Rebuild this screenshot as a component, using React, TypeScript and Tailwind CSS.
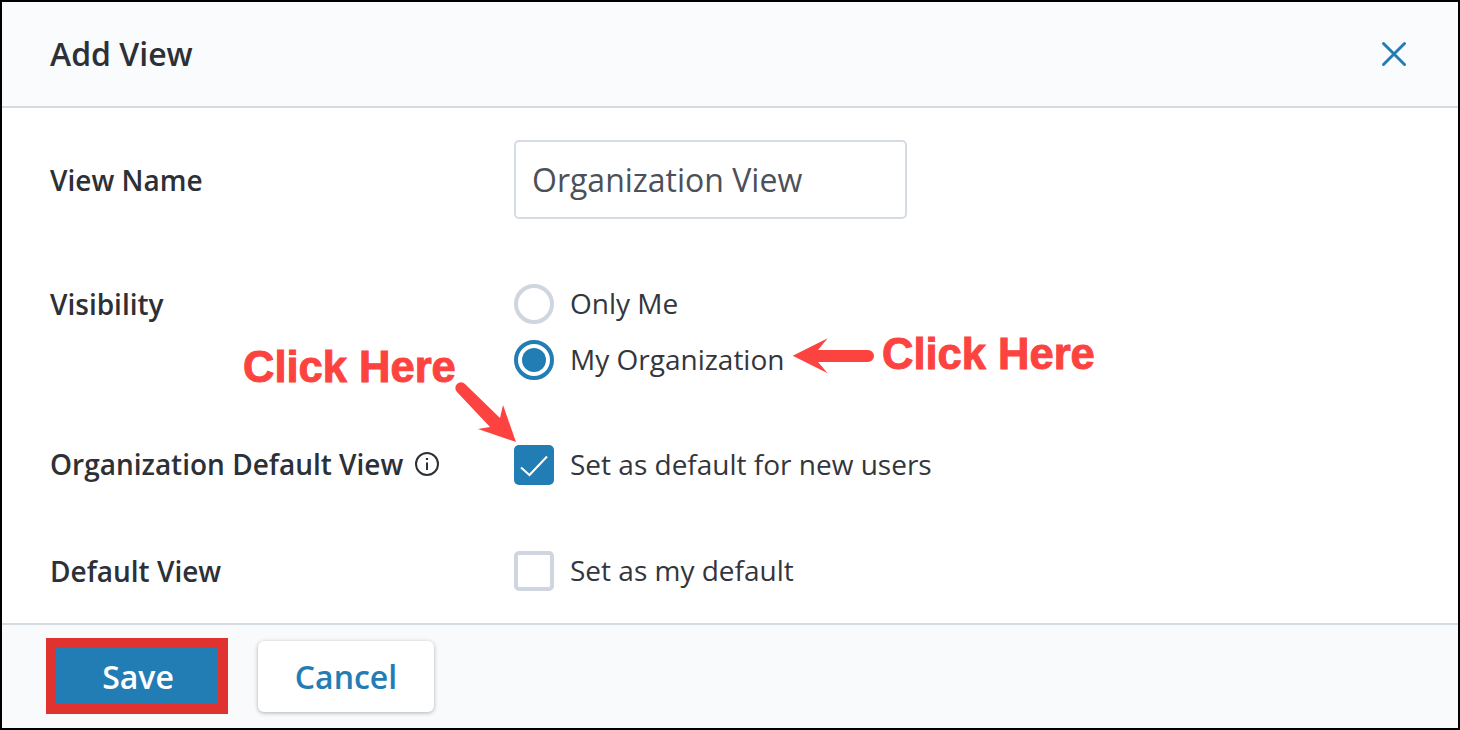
const labelClass = 'text-[28px] font-semibold leading-[38px] text-[#2d3036]';
const optionClass = 'pb-[2px] text-[28px] leading-[38px] text-[#33363c]';

function Radio({ checked }: { checked?: boolean }) {
  return (
    <span
      className={`flex h-10 w-10 shrink-0 items-center justify-center rounded-full border-4 bg-white ${
        checked ? 'border-[#237db5]' : 'border-[#cfd6df]'
      }`}
    >
      {checked && <span className="h-6 w-6 rounded-full bg-[#237db5]" />}
    </span>
  );
}

function CheckBox({ checked }: { checked?: boolean }) {
  if (checked) {
    return (
      <span className="flex h-10 w-10 shrink-0 items-center justify-center rounded-[5px] bg-[#237db5]">
        <svg width="40" height="40" viewBox="0 0 40 40" fill="none">
          <path d="M7 22.5 L15.5 30 L33 11.5" stroke="#fff" strokeWidth="2" />
        </svg>
      </span>
    );
  }
  return <span className="h-10 w-10 shrink-0 rounded-[5px] border-4 border-[#cfd6df] bg-white" />;
}

function ClickHere({ className }: { className: string }) {
  return (
    <span
      className={`absolute font-['Liberation_Sans',Arial,sans-serif] text-[43.5px] font-bold leading-none whitespace-nowrap text-[#fd4340] [-webkit-text-stroke:1px_#fd4340] ${className}`}
    >
      Click Here
    </span>
  );
}

export default function App() {
  return (
    <div className="relative flex h-[730px] w-[1460px] flex-col border-2 border-black bg-white font-['Open_Sans',sans-serif]">
      {/* Header */}
      <div className="flex h-[106px] shrink-0 items-center justify-between border-b-2 border-[#d5dce1] bg-[#fafbfd] pl-[48px] pr-[50px]">
        <h1 className="text-[32px] font-semibold leading-[42px] text-[#2d3036]">Add View</h1>
        <svg width="28" height="28" viewBox="0 0 28 28" fill="none">
          <path d="M3.5 3.5 L24.5 24.5 M24.5 3.5 L3.5 24.5" stroke="#237db5" strokeWidth="3" strokeLinecap="round" />
        </svg>
      </div>

      {/* Form */}
      <div className="flex flex-1 flex-col pl-[48px] pt-[32px]">
        <div className="flex items-center">
          <div className={`w-[464px] ${labelClass}`}>View Name</div>
          <input
            readOnly
            value="Organization View"
            className="h-[79px] w-[393px] rounded-[5px] border-2 border-[#d5dbe2] bg-white px-[16px] text-[32px] text-[#4c5058] outline-none"
          />
        </div>

        <div className="mt-[65px] flex items-start">
          <div className={`w-[464px] pt-[1px] ${labelClass}`}>Visibility</div>
          <div className="flex flex-col gap-4">
            <label className="flex items-center gap-4">
              <Radio />
              <span className={optionClass}>Only Me</span>
            </label>
            <label className="flex items-center gap-4">
              <Radio checked />
              <span className={optionClass}>My Organization</span>
            </label>
          </div>
        </div>

        <div className="mt-[65px] flex items-center">
          <div className={`flex w-[464px] items-center gap-[11px] pb-[2px] ${labelClass}`}>
            Organization Default View
            <svg width="26" height="26" viewBox="0 0 26 26" fill="none" stroke="#2d3036">
              <circle cx="13" cy="13" r="11" strokeWidth="2" />
              <path d="M13 11.5 V19" strokeWidth="2" />
              <path d="M13 7 V9" strokeWidth="2.2" />
            </svg>
          </div>
          <label className="flex items-center gap-4">
            <CheckBox checked />
            <span className={optionClass}>Set as default for new users</span>
          </label>
        </div>

        <div className="mt-[66px] flex items-center">
          <div className={`w-[464px] ${labelClass}`}>Default View</div>
          <label className="flex items-center gap-4">
            <CheckBox />
            <span className={optionClass}>Set as my default</span>
          </label>
        </div>
      </div>

      {/* Footer */}
      <div className="flex h-[105px] shrink-0 items-center gap-[30px] border-t-2 border-[#d5dce1] bg-[#f9fafc] pb-[1px] pl-[44px]">
        <button className="h-[76px] w-[182px] border-[10px] border-[#e0322f] bg-[#237db5] pl-[2px] pt-[2px] text-[32px] font-semibold text-white">
          Save
        </button>
        <button className="h-[71px] w-[176px] rounded-[6px] bg-white pt-[2px] text-[32px] font-semibold text-[#237db5] shadow-[0_1px_4px_rgba(0,0,0,0.3)]">
          Cancel
        </button>
      </div>

      {/* Annotations */}
      <ClickHere className="left-[241px] top-[344px]" />
      <ClickHere className="left-[880px] top-[331px]" />
      <svg className="absolute left-[448px] top-[374px]" width="70" height="70" viewBox="0 0 70 70" fill="#fd4340">
        <path d="M15 8 L50 42 L53 29 L66 66 L28 53 L40 51 L7 16 A5.5 5.5 0 0 1 15 8 Z" />
      </svg>
      <svg className="absolute left-[788px] top-[334px]" width="86" height="40" viewBox="0 0 86 40" fill="#fd4340">
        <path d="M2.7 19.7 L37.7 2.3 L28 14 L78 14 A6 6 0 0 1 78 26 L28 26 L37.7 37.3 Z" />
      </svg>
    </div>
  );
}
